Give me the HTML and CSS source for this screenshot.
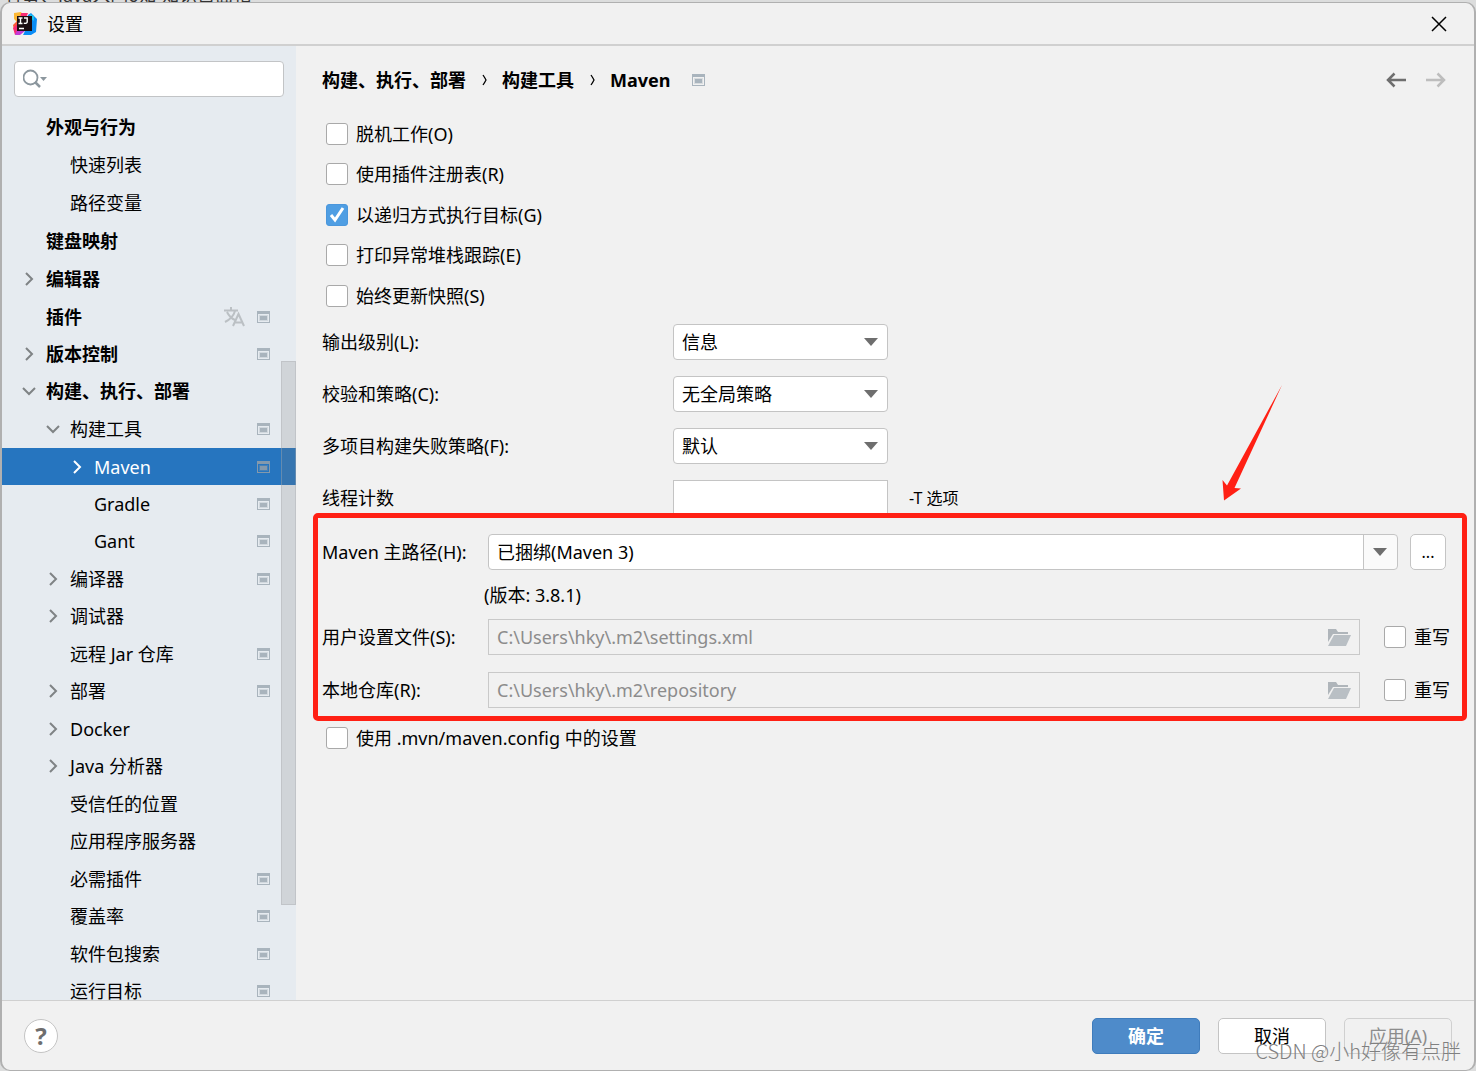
FILE: index.html
```html
<!DOCTYPE html>
<html lang="zh-CN">
<head>
<meta charset="utf-8">
<title>设置</title>
<link rel="stylesheet" href="styles.css">
</head>
<body>
<svg class="defs" aria-hidden="true">
  <symbol id="proj" viewBox="0 0 13 12"><path fill="currentColor" fill-rule="evenodd" d="M0 0h13v12H0zM1 3v8h11V3z"/><path fill="currentColor" opacity=".35" d="M2 4h9v6H2z"/><path fill="currentColor" d="M3 5h7v4H3z"/></symbol>
  <symbol id="right" viewBox="0 0 12 14"><path fill="none" stroke="currentColor" stroke-width="2" d="M3 1l6 6-6 6"/></symbol>
  <symbol id="down" viewBox="0 0 14 12"><path fill="none" stroke="currentColor" stroke-width="2" d="M1 3l6 6 6-6"/></symbol>
  <symbol id="folder" viewBox="0 0 24 18"><path fill="#afb5ba" d="M1 1h8l2 3h10v2H6L1 14z"/><path fill="#b9bfc4" d="M7 7h17l-5 11H1z"/></symbol>
</svg>
<div class="backdrop" aria-hidden="true">有雾、Java入门6知 知识目面相</div>
<main class="dialog">
  <header class="titlebar">
    <svg class="logo" viewBox="0 0 24 24" aria-hidden="true">
      <path fill="#fdb835" d="M1 1l7-1 3 5-5 7-5-5z"/><path fill="#fc5a35" d="M0 13l6-6 2 10-7 1z"/>
      <path fill="#f92c73" d="M8 1l7 0-2 5-6 0zM0 16l5-5 3 9-6 3z"/><path fill="#c33bd6" d="M4 18l8 1-5 4-5 0z"/>
      <path fill="#0a8cf5" d="M15 3l3-2 6 6-1 13-5 3-8 0 3-6z"/><path fill="#19c2ee" d="M17 2l4 2 0 5-4-3z"/>
      <path fill="#1a0d12" d="M4 4h15v15H4z"/><path fill="none" stroke="#fff" stroke-width="1.400" d="M5.500 6h4M7.500 6v5.500M5.500 11.500h4M11 6h3.200v4q0 1.700-3.400 1.300M6 16.500h5"/>
    </svg>
    <h1 class="title">设置</h1>
    <button class="icon-btn close" aria-label="关闭"><svg viewBox="0 0 16 16"><path fill="none" stroke="#000" stroke-width="1.500" d="M1 1l14 14M15 1L1 15"/></svg></button>
  </header>
  <div class="content">
    <nav class="sidebar" aria-label="设置">
      <label class="search">
        <svg viewBox="0 0 26 20" aria-hidden="true"><circle cx="7.500" cy="8.500" r="7" fill="none" stroke="#8c979e" stroke-width="1.800"/><path stroke="#8c979e" stroke-width="2.500" d="M12 13l5 5"/><path fill="#8c979e" d="M17 8h7l-3.500 4z"/></svg>
        <input type="text" aria-label="搜索">
      </label>
      <ul class="tree">
        <li class="l1 tall"><span class="arrow"></span><a href="#">外观与行为</a></li>
        <li class="l2 tall"><span class="arrow"></span><a href="#">快速列表</a></li>
        <li class="l2 tall"><span class="arrow"></span><a href="#">路径变量</a></li>
        <li class="l1 tall"><span class="arrow"></span><a href="#">键盘映射</a></li>
        <li class="l1 tall"><svg class="arrow"><use href="#right"/></svg><a href="#">编辑器</a></li>
        <li class="l1"><span class="arrow"></span><a href="#">插件</a><svg class="lang" viewBox="0 0 22 20"><path fill="none" stroke="currentColor" stroke-width="2" d="M0 3.500h14M7 0v3M3 5q3 6 8 8M11 4q-2 7-10 11M9 19l5.500-12L20 19M11 15.500h7.500"/></svg><svg class="proj"><use href="#proj"/></svg></li>
        <li class="l1"><svg class="arrow"><use href="#right"/></svg><a href="#">版本控制</a><svg class="proj"><use href="#proj"/></svg></li>
        <li class="l1 tall"><svg class="arrow"><use href="#down"/></svg><a href="#">构建、执行、部署</a></li>
        <li class="l2 tall"><svg class="arrow"><use href="#down"/></svg><a href="#">构建工具</a><svg class="proj"><use href="#proj"/></svg></li>
        <li class="l3 selected"><svg class="arrow"><use href="#right"/></svg><a href="#">Maven</a><svg class="proj"><use href="#proj"/></svg></li>
        <li class="l3"><span class="arrow"></span><a href="#">Gradle</a><svg class="proj"><use href="#proj"/></svg></li>
        <li class="l3 tall"><span class="arrow"></span><a href="#">Gant</a><svg class="proj"><use href="#proj"/></svg></li>
        <li class="l2"><svg class="arrow"><use href="#right"/></svg><a href="#">编译器</a><svg class="proj"><use href="#proj"/></svg></li>
        <li class="l2 tall"><svg class="arrow"><use href="#right"/></svg><a href="#">调试器</a></li>
        <li class="l2"><span class="arrow"></span><a href="#">远程 Jar 仓库</a><svg class="proj"><use href="#proj"/></svg></li>
        <li class="l2 tall"><svg class="arrow"><use href="#right"/></svg><a href="#">部署</a><svg class="proj"><use href="#proj"/></svg></li>
        <li class="l2"><svg class="arrow"><use href="#right"/></svg><a href="#">Docker</a></li>
        <li class="l2 tall"><svg class="arrow"><use href="#right"/></svg><a href="#">Java 分析器</a></li>
        <li class="l2"><span class="arrow"></span><a href="#">受信任的位置</a></li>
        <li class="l2 tall"><span class="arrow"></span><a href="#">应用程序服务器</a></li>
        <li class="l2"><span class="arrow"></span><a href="#">必需插件</a><svg class="proj"><use href="#proj"/></svg></li>
        <li class="l2 tall"><span class="arrow"></span><a href="#">覆盖率</a><svg class="proj"><use href="#proj"/></svg></li>
        <li class="l2"><span class="arrow"></span><a href="#">软件包搜索</a><svg class="proj"><use href="#proj"/></svg></li>
        <li class="l2 tall"><span class="arrow"></span><a href="#">运行目标</a><svg class="proj"><use href="#proj"/></svg></li>
      </ul>
      <div class="thumb"></div>
    </nav>
    <section class="panel">
      <div class="crumbs">
        <a href="#">构建、执行、部署</a><svg class="sep" viewBox="0 0 6 12"><path fill="none" stroke="#000" stroke-width="1.300" d="M1 1q2 3 3 5-1 2-3 5"/></svg><a href="#">构建工具</a><svg class="sep" viewBox="0 0 6 12"><path fill="none" stroke="#000" stroke-width="1.300" d="M1 1q2 3 3 5-1 2-3 5"/></svg><a href="#">Maven</a><svg class="proj"><use href="#proj"/></svg>
        <div class="history">
          <button class="icon-btn" aria-label="后退"><svg viewBox="0 0 20 16"><path fill="none" stroke="#6e6e6e" stroke-width="2.500" d="M20 8H2M8.500 1.500L2 8l6.500 6.500"/></svg></button>
          <button class="icon-btn" aria-label="前进" disabled><svg viewBox="0 0 20 16"><path fill="none" stroke="#bdbdbd" stroke-width="2.500" d="M0 8h18M11.500 1.500L18 8l-6.500 6.500"/></svg></button>
        </div>
      </div>
      <div class="checks">
        <label class="check"><input type="checkbox">脱机工作(O)</label>
        <label class="check"><input type="checkbox">使用插件注册表(R)</label>
        <label class="check tall"><input type="checkbox" checked>以递归方式执行目标(G)</label>
        <label class="check"><input type="checkbox">打印异常堆栈跟踪(E)</label>
        <label class="check tall"><input type="checkbox">始终更新快照(S)</label>
      </div>
      <div class="options">
        <label for="level">输出级别(L):</label><select id="level"><option>信息</option></select><span></span>
        <label for="policy">校验和策略(C):</label><select id="policy"><option>无全局策略</option></select><span></span>
        <label for="fail">多项目构建失败策略(F):</label><select id="fail"><option>默认</option></select><span></span>
        <label for="threads">线程计数</label><input id="threads" type="text"><span class="hint">-T 选项</span>
      </div>
      <div class="paths">
        <label for="home">Maven 主路径(H):</label>
        <div class="home"><select id="home"><option>已捆绑(Maven 3)</option></select><button class="btn more" aria-label="浏览">...</button></div>
        <p class="version">(版本: 3.8.1)</p>
        <label for="user">用户设置文件(S):</label>
        <div class="file"><div class="field"><input id="user" type="text" value="C:\Users\hky\.m2\settings.xml" disabled><svg><use href="#folder"/></svg></div><label class="check"><input type="checkbox">重写</label></div>
        <label for="repo">本地仓库(R):</label>
        <div class="file"><div class="field"><input id="repo" type="text" value="C:\Users\hky\.m2\repository" disabled><svg><use href="#folder"/></svg></div><label class="check"><input type="checkbox">重写</label></div>
        <svg class="pointer" viewBox="0 0 62 116" aria-hidden="true"><path fill="#ff2014" d="M61 0L13.500 103l6.500 .5-17 12L1.500 95l4.500 5.500z"/></svg>
      </div>
      <label class="check last"><input type="checkbox">使用 .mvn/maven.config 中的设置</label>
    </section>
  </div>
  <footer class="footer">
    <button class="help" aria-label="帮助">?</button>
    <button class="btn primary">确定</button>
    <button class="btn">取消</button>
    <button class="btn apply" disabled>应用(A)</button>
  </footer>
</main>
<div class="watermark">CSDN @小h好像有点胖</div>
</body>
</html>
```
FILE: styles.css
```css
* { box-sizing: border-box; }
body {
  margin: 0;
  height: 100vh;
  display: flex;
  flex-direction: column;
  position: relative;
  overflow: hidden;
  background: #dcdddd;
  color: #000;
  font: 18px/24px "Noto Sans", "Noto Sans CJK SC", sans-serif;
}
button, input, select { font: inherit; color: inherit; }
a { color: inherit; text-decoration: none; }
svg { display: block; flex: none; }
.defs { position: absolute; width: 0; height: 0; }
.backdrop {
  height: 2px;
  flex: none;
  padding-left: 4px;
  overflow: hidden;
  display: flex;
  align-items: flex-end;
  white-space: nowrap;
  line-height: 14px;
  color: #333;
}
.dialog {
  flex: 1;
  min-height: 0;
  display: flex;
  flex-direction: column;
  border: 2px solid #b0b0b0;
  border-top-width: 1px;
  border-bottom-width: 1px;
  border-radius: 10px;
  background: #f1f1f1;
  overflow: hidden;
}
.titlebar {
  flex: none;
  height: 43px;
  display: flex;
  align-items: center;
  padding: 0 27px 0 11px;
  border-bottom: 2px solid #d0d0d0;
}
.logo { width: 24px; height: 24px; margin-right: 10px; }
.title { margin: 0; font-size: 18px; font-weight: 400; }
.icon-btn { display: block; padding: 0; border: 0; background: none; }
.close { margin-left: auto; }
.close svg { width: 16px; height: 16px; }
.content { flex: 1; min-height: 0; display: flex; }
.sidebar {
  position: relative;
  flex: none;
  width: 294px;
  overflow: hidden;
  background: #e6ebf0;
}
.search {
  display: flex;
  align-items: center;
  height: 36px;
  margin: 15px 12px 11px;
  padding: 0 8px;
  border: 1px solid #c2c4c6;
  border-radius: 4px;
  background: #fff;
}
.search svg { width: 26px; height: 20px; }
.search input { flex: 1; min-width: 0; border: 0; outline: 0; background: none; }
.tree { list-style: none; margin: 0; padding: 0; }
.tree li { display: flex; align-items: center; height: 37px; padding-right: 26px; }
.tree .tall { height: 38px; }
.tree a { flex: 1; white-space: nowrap; }
.l1 { padding-left: 20px; font-weight: 700; }
.l2 { padding-left: 44px; }
.l3 { padding-left: 68px; }
.arrow { flex: none; width: 14px; height: 14px; margin-right: 10px; color: #7f8385; }
.proj { width: 13px; height: 12px; color: #a9b4bd; }
.lang { width: 22px; height: 20px; margin-right: 11px; color: #bbc0c4; }
.selected { background: #2675bf; color: #fff; }
.selected .arrow { color: #fff; }
.selected .proj { color: #8499ac; }
.thumb {
  position: absolute;
  right: 0;
  top: 33%;
  width: 15px;
  height: 57%;
  border: 1px solid #a9adb166;
  background: #77777733;
}
.panel { flex: 1; min-width: 0; padding: 20px 7px 0 17px; }
.crumbs { display: flex; align-items: center; height: 28px; padding: 0 21px 0 9px; font-weight: 700; }
.sep { width: 6px; height: 12px; margin: 0 14px 0 16px; }
.crumbs .proj { margin-left: 22px; }
.history { display: flex; gap: 20px; margin-left: auto; }
.history svg { width: 20px; height: 16px; }
.checks { padding: 20px 0 0 13px; }
.check { display: flex; align-items: center; gap: 8px; white-space: nowrap; }
.checks .check { height: 40px; }
.checks .tall { height: 41px; }
.check input {
  appearance: none;
  flex: none;
  width: 22px;
  height: 22px;
  margin: 0;
  border: 1px solid #a9a9a9;
  border-radius: 3px;
  background: #fff;
}
.check input:checked {
  border-color: #4b97dc;
  background: #4f9ee3 url("data:image/svg+xml,%3Csvg xmlns='http://www.w3.org/2000/svg' viewBox='0 0 18 18'%3E%3Cpath d='M3 9l4 5 8-12' fill='none' stroke='white' stroke-width='3'/%3E%3C/svg%3E") center / 18px;
}
.options {
  display: grid;
  grid-template-columns: 351px 215px 1fr;
  grid-auto-rows: 36px;
  row-gap: 16px;
  align-items: center;
  padding: 8px 0 0 9px;
}
select, #threads {
  appearance: none;
  width: 100%;
  height: 36px;
  padding: 0 8px;
  border: 1px solid #c4c4c4;
  border-radius: 4px;
  background: #fff url("data:image/svg+xml,%3Csvg xmlns='http://www.w3.org/2000/svg' viewBox='0 0 14 8'%3E%3Cpath d='M0 0h14L7 8z' fill='%236e6e6e'/%3E%3C/svg%3E") no-repeat right 9px center / 14px 8px;
}
#threads { background: #fff; border-radius: 0; }
.hint { padding-left: 21px; font-size: 16px; }
.paths {
  position: relative;
  display: grid;
  grid-template-columns: 166px 1fr;
  grid-template-rows: 36px 49px 36px 17px 36px;
  align-items: center;
  margin-top: -3px;
  padding: 16px 12px 8px 4px;
  border: 5px solid #ff2014;
  border-radius: 5px;
  background: #f1f1f1;
}
.paths > [for="repo"], .paths > [for="repo"] + .file { grid-row: 5; }
.home, .file { display: flex; align-items: center; }
.home { gap: 12px; padding-right: 4px; }
.home select {
  flex: 1;
  background-image: url("data:image/svg+xml,%3Csvg xmlns='http://www.w3.org/2000/svg' viewBox='0 0 34 34'%3E%3Cpath d='M0 0h34v34H0z' fill='%23fafafa'/%3E%3Cpath d='M.5 0v34' stroke='%23c4c4c4'/%3E%3Cpath d='M10 13h14l-7 8z' fill='%236e6e6e'/%3E%3C/svg%3E");
  background-position: right center;
  background-size: 34px 34px;
}
.version { grid-column: 2; margin: 0 0 0 -4px; }
.file { gap: 24px; }
.field {
  flex: 1;
  min-width: 0;
  height: 36px;
  display: flex;
  align-items: center;
  padding: 0 8px;
  border: 1px solid #c9c9c9;
}
.field input { flex: 1; min-width: 0; padding: 0; border: 0; background: none; color: #8c8c8c; }
.field svg { width: 24px; height: 18px; }
.pointer { position: absolute; right: 179px; bottom: calc(100% + 17px); width: 62px; height: 116px; }
.last { height: 34px; padding-left: 13px; }
.footer {
  flex: none;
  height: 70px;
  display: flex;
  align-items: center;
  gap: 18px;
  padding: 0 22px;
  border-top: 1px solid #d0d0d0;
}
.btn {
  width: 108px;
  height: 36px;
  padding: 0;
  border: 1px solid #c4c4c4;
  border-radius: 5px;
  background: #fff;
}
.more { width: 36px; font-size: 16px; }
.primary { border-color: #3f7cbc; background: #4e8bca; color: #fff; font-weight: 700; }
.apply { background: none; border-color: #d0d0d0; color: #8c8c8c; }
.help {
  width: 34px;
  height: 34px;
  margin-right: auto;
  padding: 0;
  border: 1px solid #c4c4c4;
  border-radius: 50%;
  background: #fff;
  color: #6e6e6e;
  font-size: 24px;
  font-weight: 700;
}
.watermark {
  position: absolute;
  right: 15px;
  bottom: 8px;
  color: #808080;
  font-family: "Noto Sans CJK SC", sans-serif;
  font-size: 20px;
  font-weight: 300;
  pointer-events: none;
}
```
